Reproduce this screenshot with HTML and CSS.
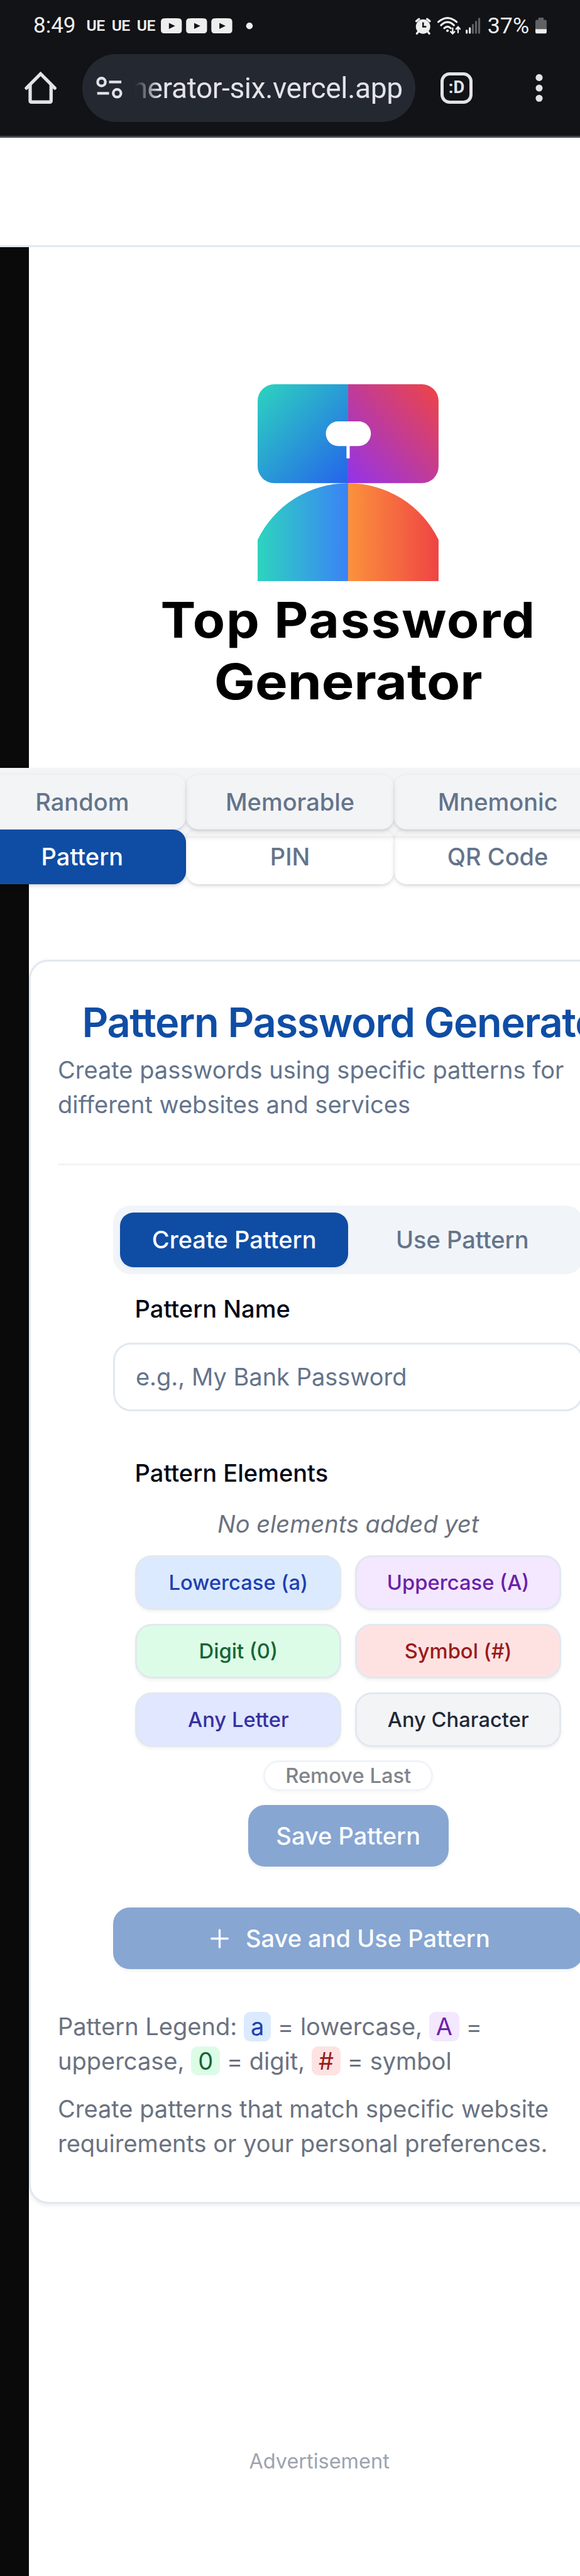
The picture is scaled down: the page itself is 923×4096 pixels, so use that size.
FILE: index.html
```html
<!DOCTYPE html>
<html lang="en">
<head>
<meta charset="utf-8">
<title>Top Password Generator</title>
<link rel="stylesheet" href="styles.css">
</head>
<body>
<div class="chrome">
  <div class="status">
    <span class="clock">8:49</span>
    <span class="ue">UE</span><span class="ue">UE</span><span class="ue">UE</span>
    <svg class="notif" viewBox="300 34 172 29" fill="#eeeeee">
      <path fill-rule="evenodd" d="M306 34.2Q319.500 33.500 333 34.200Q339 34.300 339 40.500V56Q339 62 333 62.200Q319.500 62.900 306 62.200Q300 62 300 56V40.500Q300 34.300 306 34.200ZM315 42.700V54L326.500 48.400Z"/>
      <path fill-rule="evenodd" transform="translate(47)" d="M306 34.200Q319.500 33.500 333 34.200Q339 34.300 339 40.500V56Q339 62 333 62.200Q319.500 62.900 306 62.200Q300 62 300 56V40.500Q300 34.300 306 34.200ZM315 42.700V54L326.500 48.400Z"/>
      <path fill-rule="evenodd" transform="translate(94)" d="M306 34.200Q319.500 33.500 333 34.200Q339 34.300 339 40.500V56Q339 62 333 62.200Q319.500 62.900 306 62.200Q300 62 300 56V40.500Q300 34.300 306 34.200ZM315 42.700V54L326.500 48.400Z"/>
      <circle cx="465" cy="48.200" r="6.200"/>
    </svg>
    <svg class="radio" viewBox="772 30 124 36">
      <circle cx="787.500" cy="49" r="13.400" fill="#eeeeee"/>
      <path d="M775 39l5-4M800 39l-5-4M779 58l-3 4M796 58l3 4" stroke="#eeeeee" stroke-width="4" stroke-linecap="round"/>
      <path d="M787.500 41v8.300h6" fill="none" stroke="#121316" stroke-width="3"/>
      <g fill="none" stroke="#eeeeee" stroke-width="3.600" stroke-linecap="round">
        <path d="M816 40.500Q833 25.500 850 40.500M821 46.500Q833 35 845 46.500M827 52Q833 46.500 839 52"/>
        <path d="M842.600 52v9.500M839 58.500l3.600 3.800 3.600-3.800M852.700 60V50.500M849.100 53.500l3.600-3.800 3.600 3.800" stroke-width="2.800"/>
      </g>
      <circle cx="833" cy="56.700" r="2.500" fill="#eeeeee"/>
      <path d="M868.800 56.500v4M874.600 52v8.500" stroke="#eeeeee" stroke-width="3.700" stroke-linecap="round"/>
      <path d="M880.300 46v14.500M886.200 40v20.500M892 34.500v26" stroke="#606163" stroke-width="3.700" stroke-linecap="round"/>
    </svg>
    <span class="percent">37%</span>
    <svg class="battery" viewBox="0 0 21 30">
      <path d="M5.500 1.500Q5.500 0 7 0h7q1.500 0 1.500 1.500V4H18q3 0 3 3v14.500H0V7q0-3 3-3h2.500Z" fill="#606163"/>
      <path d="M0 21.500h21v5q0 3-3 3H3q-3 0-3-3Z" fill="#eeeeee"/>
    </svg>
  </div>
  <div class="toolbar">
    <svg class="home" viewBox="0 0 60 60" fill="none" stroke="#e3e2e8" stroke-width="6.200" stroke-linecap="round" stroke-linejoin="round">
      <path d="M3.500 30.500L30 4l26.500 26.500" stroke-linejoin="miter"/>
      <path d="M10.500 25v29q0 2.500 2.500 2.500h34q2.500 0 2.500-2.500V25"/>
    </svg>
    <div class="address">
      <svg class="tune" viewBox="0 0 50 44" fill="none" stroke="#e3e2e8" stroke-width="5">
        <circle cx="10" cy="11" r="7.200"/><path d="M24 11h23M2 32h22"/><circle cx="39" cy="32" r="7.200"/>
      </svg>
      <div class="url"><span>generator-six.vercel.app</span></div>
    </div>
    <div class="tabcount">:D</div>
    <svg class="dots" viewBox="0 0 14 54" fill="#e3e2e8"><circle cx="7" cy="7.500" r="6.500"/><circle cx="7" cy="27" r="6.500"/><circle cx="7" cy="46" r="6.500"/></svg>
  </div>
</div>
<header class="site-header"></header>
<main class="main">
  <div class="column">
    <svg class="logo" viewBox="0 0 337 367">
      <defs>
        <linearGradient id="a" x1="0" y1="0" x2="1" y2="1"><stop offset="0" stop-color="#2dd4bf"/><stop offset="1" stop-color="#2563eb"/></linearGradient>
        <linearGradient id="b" x1="1" y1="0" x2="0" y2="1"><stop offset="0" stop-color="#ef4444"/><stop offset="1" stop-color="#9333ea"/></linearGradient>
        <linearGradient id="c"><stop offset="0" stop-color="#2dd4bf"/><stop offset="1" stop-color="#3b82f6"/></linearGradient>
        <linearGradient id="d"><stop offset="0" stop-color="#fb923c"/><stop offset="1" stop-color="#ef4444"/></linearGradient>
      </defs>
      <path fill="url(#a)" d="M168.500 0H31A31 31 0 0 0 0 31V153A31 31 0 0 0 31 184H168.500Z"/>
      <path fill="url(#b)" d="M168.500 0H306A31 31 0 0 1 337 31V153A31 31 0 0 1 306 184H168.500Z"/>
      <rect x="127" y="69" width="84" height="46" rx="23" fill="#fff"/>
      <path d="M165.500 114h6v24h-6z" fill="#fff"/>
      <path fill="url(#c)" d="M168.500 184A187.400 187.400 0 0 0 0 289.400V367H168.500Z"/>
      <path fill="url(#d)" d="M168.500 184A187.400 187.400 0 0 1 337 289.400V367H168.500Z"/>
    </svg>
    <h1 class="brand"><span class="brand-top">Top Password</span><br><span class="brand-bottom">Generator</span></h1>
    <nav class="modes">
      <a class="mode">Random</a><a class="mode">Memorable</a><a class="mode">Mnemonic</a>
      <a class="mode mode-active">Pattern</a><a class="mode">PIN</a><a class="mode">QR Code</a>
    </nav>
    <section class="card">
      <h2 class="card-title">Pattern Password Generator</h2>
      <p class="card-desc">Create passwords using specific patterns for<br>different websites and services</p>
      <div class="rule"></div>
      <div class="form">
        <div class="switch"><span class="seg seg-active">Create Pattern</span><span class="seg">Use Pattern</span></div>
        <label class="label name-label">Pattern Name</label>
        <div class="input">e.g., My Bank Password</div>
        <label class="label elements-label">Pattern Elements</label>
        <p class="empty">No elements added yet</p>
        <div class="chips">
          <span class="chip blue">Lowercase (a)</span><span class="chip purple">Uppercase (A)</span>
          <span class="chip green">Digit (0)</span><span class="chip red">Symbol (#)</span>
          <span class="chip indigo">Any Letter</span><span class="chip gray">Any Character</span>
        </div>
        <span class="remove">Remove Last</span>
        <span class="btn save">Save Pattern</span>
        <span class="btn save-use"><svg class="plus" viewBox="0 0 48 48" stroke="#f8fafc" stroke-width="4" stroke-linecap="round"><path d="M9 24h30M24 8v32"/></svg>Save and Use Pattern</span>
      </div>
      <p class="legend">Pattern Legend: <span class="key blue">a</span> = lowercase, <span class="key purple">A</span> =<br>uppercase, <span class="key green">0</span> = digit, <span class="key red">#</span> = symbol</p>
      <p class="note">Create patterns that match specific website<br>requirements or your personal preferences.</p>
    </section>
    <div class="ad">Advertisement</div>
  </div>
</main>
</body>
</html>
```
FILE: styles.css
```css
html { font-size: 8.5435px; }
* { box-sizing: border-box; margin: 0; padding: 0; }
body { width: 923px; height: 4096px; overflow: hidden; background: #fff; font-family: Inter, "Liberation Sans", sans-serif; font-size: 4.45rem; line-height: 6.4rem; white-space: nowrap; display: flex; flex-direction: column; }
svg { display: block; flex: none; }

.chrome { height: 25.6rem; flex: none; background: #121316; border-bottom: 3px solid #46464f; font-family: Roboto, sans-serif; color: #eee; }
.status { display: flex; height: 9.6rem; padding-left: 6.2rem; align-items: center; }
.clock { width: 9.9rem; font-size: 4.1rem; }
.ue { width: 4.7rem; font-size: 2.9rem; font-weight: 600; letter-spacing: -.07rem; padding-top: .1rem; }
.notif { width: 17.2rem; height: 2.9rem; margin-left: -.2rem; }
.radio { width: 12.4rem; height: 3.6rem; margin-left: 30rem; }
.percent { width: 8.8rem; font-size: 4.2rem; margin-left: 1.2rem; }
.battery { width: 2.1rem; height: 3rem; margin-left: .1rem; }
.toolbar { display: flex; height: 13.6rem; padding-left: 4.6rem; align-items: center; }
.home { width: 6rem; height: 6rem; }
.address { display: flex; align-items: center; width: 62.1rem; height: 12.7rem; margin-left: 4.7rem; border-radius: 6.4rem; background: #242830; padding-left: 2.6rem; }
.tune { width: 5rem; height: 4.4rem; }
.url { display: flex; justify-content: flex-end; width: 49.8rem; margin-left: 2.3rem; overflow: hidden; color: #e3e2e8; font-size: 5.4rem; letter-spacing: -.045rem; -webkit-mask-image: linear-gradient(90deg, transparent, #000 4.5rem); mask-image: linear-gradient(90deg, transparent, #000 4.5rem); }
.tabcount { width: 5.9rem; height: 5.9rem; margin-left: 4.7rem; border: 5.5px solid #e3e2e8; border-radius: 1.7rem; color: #e3e2e8; font-size: 3.2rem; font-weight: 700; line-height: 4.6rem; text-align: center; }
.dots { width: 1.4rem; height: 5.4rem; margin-left: 11.7rem; }

.site-header { height: 20.4rem; flex: none; border-bottom: 3px solid #e2e8f0; background: #fff; }
.main { flex: 1; padding-left: 5.37rem; background: #0a0a0a; }
.column { width: 119rem; height: 100%; background: #fff; display: flex; flex-direction: column; }
.logo { width: 33.7rem; height: 36.7rem; margin: 25.5rem auto 0; }
.brand { margin-top: 1.5rem; font-size: 9.2rem; line-height: 11.4rem; font-weight: 700; text-align: center; color: #000; }
.brand-top, .brand-bottom { display: inline-block; }
.brand-top { letter-spacing: .2rem; transform: scaleX(1.066); }
.brand-bottom { transform: scaleX(1.105); }

.modes { display: grid; grid-template-columns: repeat(3, 38.7rem); grid-auto-rows: 10.2rem; height: 12.8rem; width: 116.1rem; margin: 10.4rem 0 0 -9.4rem; padding-top: 1.3rem; background: #f3f4f6; box-shadow: 0 .3rem .9rem rgba(0,0,0,.06), 0 .3rem .6rem -.3rem rgba(0,0,0,.08); font-weight: 500; color: #64748b; }
.mode { display: flex; align-items: center; justify-content: center; border-radius: 2.4rem; box-shadow: 0 .3rem .9rem rgba(0,0,0,.1), 0 .3rem .6rem -.3rem rgba(0,0,0,.1); }
.mode-active { background: #0f4da5; color: #fff; }

.card { height: 231.6rem; margin-top: 22.9rem; border: 3px solid #e2e8f0; border-radius: 3.6rem; background: #fff; box-shadow: 0 .3rem .9rem rgba(0,0,0,.08); color: #6b7280; padding: calc(7.9rem - 3px) calc(5.4rem - 3px) 0; }
.card-title { font-size: 7.6rem; line-height: 7.7rem; font-weight: 600; letter-spacing: -.155rem; text-align: center; color: #0f4da5; }
.card-desc { margin-top: 1.75rem; color: #64748b; }
.rule { height: 3px; margin-top: 7.75rem; background: #f3f4f6; }
.form { width: 87.5rem; margin: 7.6rem auto 0; display: flex; flex-direction: column; }
.switch { display: flex; height: 12.7rem; padding: 1.25rem; border-radius: 3.2rem; background: #f1f5f9; font-weight: 500; color: #64748b; }
.seg { flex: 1; display: flex; align-items: center; justify-content: center; border-radius: 2.5rem; }
.seg-active { background: #0f4da5; color: #fff; box-shadow: 0 .3rem .6rem rgba(0,0,0,.05); }
.label { padding-left: 4rem; font-weight: 500; color: #020817; }
.name-label { margin-top: 3.25rem; }
.input { display: flex; align-items: center; height: 12.7rem; margin-top: 3.15rem; padding-left: 3.8rem; border: 3px solid #e2e8f0; border-radius: 3.3rem; color: #64748b; }
.elements-label { margin-top: 8.36rem; }
.empty { margin-top: 3rem; text-align: center; font-style: italic; }
.chips { display: grid; grid-template-columns: repeat(2, 38.4rem); gap: 2.55rem; justify-content: center; margin-top: 2.64rem; }
.chip { display: flex; align-items: center; justify-content: center; height: 10.2rem; border: 3px solid #e2e8f0; border-radius: 3.1rem; box-shadow: 0 .3rem .6rem rgba(0,0,0,.05); font-size: 3.83rem; font-weight: 500; }
.remove { display: flex; align-items: center; justify-content: center; align-self: center; width: 31.6rem; height: 5.7rem; margin-top: 2.5rem; border: 3px solid #f0f3f8; border-radius: 2.85rem; box-shadow: 0 .3rem .6rem rgba(0,0,0,.03); font-size: 3.83rem; font-weight: 500; color: #81848b; }
.btn { display: flex; align-items: center; justify-content: center; height: 11.5rem; border-radius: 3.1rem; background: #87a6d2; color: #fbfdfe; font-weight: 500; box-shadow: 0 .3rem .6rem rgba(0,0,0,.05); }
.save { align-self: center; width: 37.3rem; margin-top: 2.6rem; }
.save-use { margin-top: 7.6rem; }
.plus { width: 4.8rem; height: 4.8rem; margin-right: 2.5rem; }
.legend { margin-top: 7.5rem; }
.key { display: inline-block; height: 5.4rem; line-height: 5.4rem; padding: 0 1.3rem; border-radius: 1.2rem; }
.note { margin-top: 2.5rem; }
.blue { background: #dbeafe; color: #1e40af; }
.purple { background: #f3e8ff; color: #6b21a8; }
.green { background: #dcfce7; color: #166534; }
.red { background: #fee2e2; color: #991b1b; }
.indigo { background: #e0e7ff; color: #3730a3; }
.gray { background: #f3f4f6; color: #1f2937; }
.ad { width: 108.2rem; margin-top: 45.3rem; font-size: 3.8rem; line-height: 5.4rem; text-align: center; color: #9ca3af; }
```
